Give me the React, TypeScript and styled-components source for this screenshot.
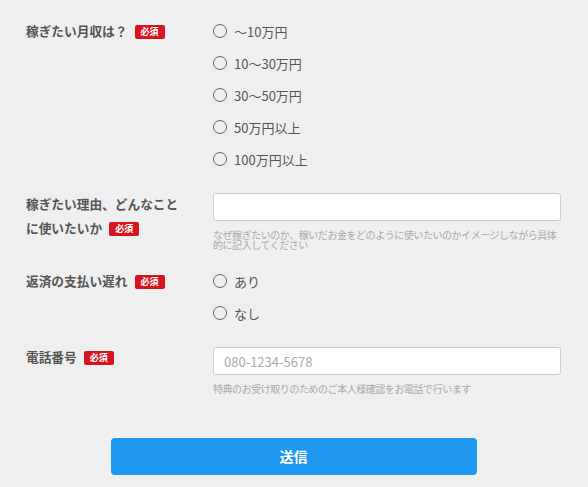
import React from 'react';
import styled, {createGlobalStyle} from 'styled-components';

const GlobalStyle = createGlobalStyle`
	html, body {
		margin: 0;
		padding: 0;
		background: #efefef;
	}
	body {
		font-family: "Noto Sans CJK JP", "Noto Sans", sans-serif;
		color: #555;
	}
`;

const Form = styled.form`
	display: flex;
	flex-direction: column;
	gap: 16px;
	padding: 15px 27px 13px 26px;
	min-height: 487px;
	box-sizing: border-box;
`;

const Row = styled.div`
	display: grid;
	grid-template-columns: 187px 1fr;
	align-items: start;
`;

const Label = styled.div<{$top?: number}>`
	font-size: 12.7px;
	font-weight: bold;
	line-height: 24px;
	color: #555;
	padding-top: ${(p) => p.$top ?? 0}px;
	padding-right: 20px;
`;

const Badge = styled.span`
	display: inline-block;
	margin-left: 7px;
	background: #d9131d;
	color: #fff;
	font-size: 9px;
	font-weight: bold;
	line-height: 14px;
	height: 14px;
	padding: 0 6px;
	border-radius: 2px;
	vertical-align: 1px;
`;

const RadioGroup = styled.div`
	display: flex;
	flex-direction: column;
`;

const RadioItem = styled.label`
	display: flex;
	align-items: center;
	gap: 7px;
	height: 32px;
	font-size: 13px;
	color: #555;
`;

const Circle = styled.span`
	width: 14px;
	height: 14px;
	box-sizing: border-box;
	border: 1.3px solid #666;
	border-radius: 50%;
	background: transparent;
	flex-shrink: 0;
`;

const Field = styled.div<{$top?: number}>`
	display: flex;
	flex-direction: column;
	padding-top: ${(p) => p.$top ?? 0}px;
`;

const Input = styled.input`
	height: 28px;
	box-sizing: border-box;
	border: 1px solid #ccc;
	border-radius: 3px;
	background: #fff;
	padding: 0 10px;
	font-family: "Noto Sans CJK JP", "Noto Sans", sans-serif;
	font-size: 13px;
	color: #555;
	outline: none;
	&::placeholder {
		color: #aaa;
	}
`;

const Help = styled.p`
	margin: 9px 0 0;
	font-size: 10px;
	letter-spacing: -0.45px;
	line-height: 9.5px;
	color: #aaa;
`;

const ButtonWrap = styled.div`
	display: flex;
	justify-content: center;
	padding-top: 28px;
`;

const Submit = styled.button`
	width: 366px;
	height: 37px;
	border: none;
	border-radius: 4px;
	background: #1d97f0;
	color: #fff;
	font-family: "Noto Sans CJK JP", "Noto Sans", sans-serif;
	font-size: 14px;
	font-weight: bold;
	cursor: pointer;
`;

const Radio = ({label}: {label: string}) => (
	<RadioItem>
		<Circle />
		{label}
	</RadioItem>
);

const incomes = ['～10万円', '10～30万円', '30～50万円', '50万円以上', '100万円以上'];

export default function App() {
	return (
		<>
			<GlobalStyle />
			<Form onSubmit={(e) => e.preventDefault()}>
				<Row>
					<Label $top={4}>
						稼ぎたい月収は？<Badge>必須</Badge>
					</Label>
					<RadioGroup>
						{incomes.map((v) => (
							<Radio key={v} label={v} />
						))}
					</RadioGroup>
				</Row>
				<Row>
					<Label $top={1}>
						稼ぎたい理由、どんなこと
						<br />
						に使いたいか<Badge>必須</Badge>
					</Label>
					<Field $top={2}>
						<Input type="text" />
						<Help>
							なぜ稼ぎたいのか、稼いだお金をどのように使いたいのかイメージしながら具体的に記入してください
						</Help>
					</Field>
				</Row>
				<Row>
					<Label $top={4}>
						返済の支払い遅れ<Badge>必須</Badge>
					</Label>
					<RadioGroup>
						<Radio label="あり" />
						<Radio label="なし" />
					</RadioGroup>
				</Row>
				<Row>
					<Label>
						電話番号<Badge>必須</Badge>
					</Label>
					<Field $top={2}>
						<Input type="tel" placeholder="080-1234-5678" />
						<Help>特典のお受け取りのためのご本人様確認をお電話で行います</Help>
					</Field>
				</Row>
				<ButtonWrap>
					<Submit type="submit">送信</Submit>
				</ButtonWrap>
			</Form>
		</>
	);
}
